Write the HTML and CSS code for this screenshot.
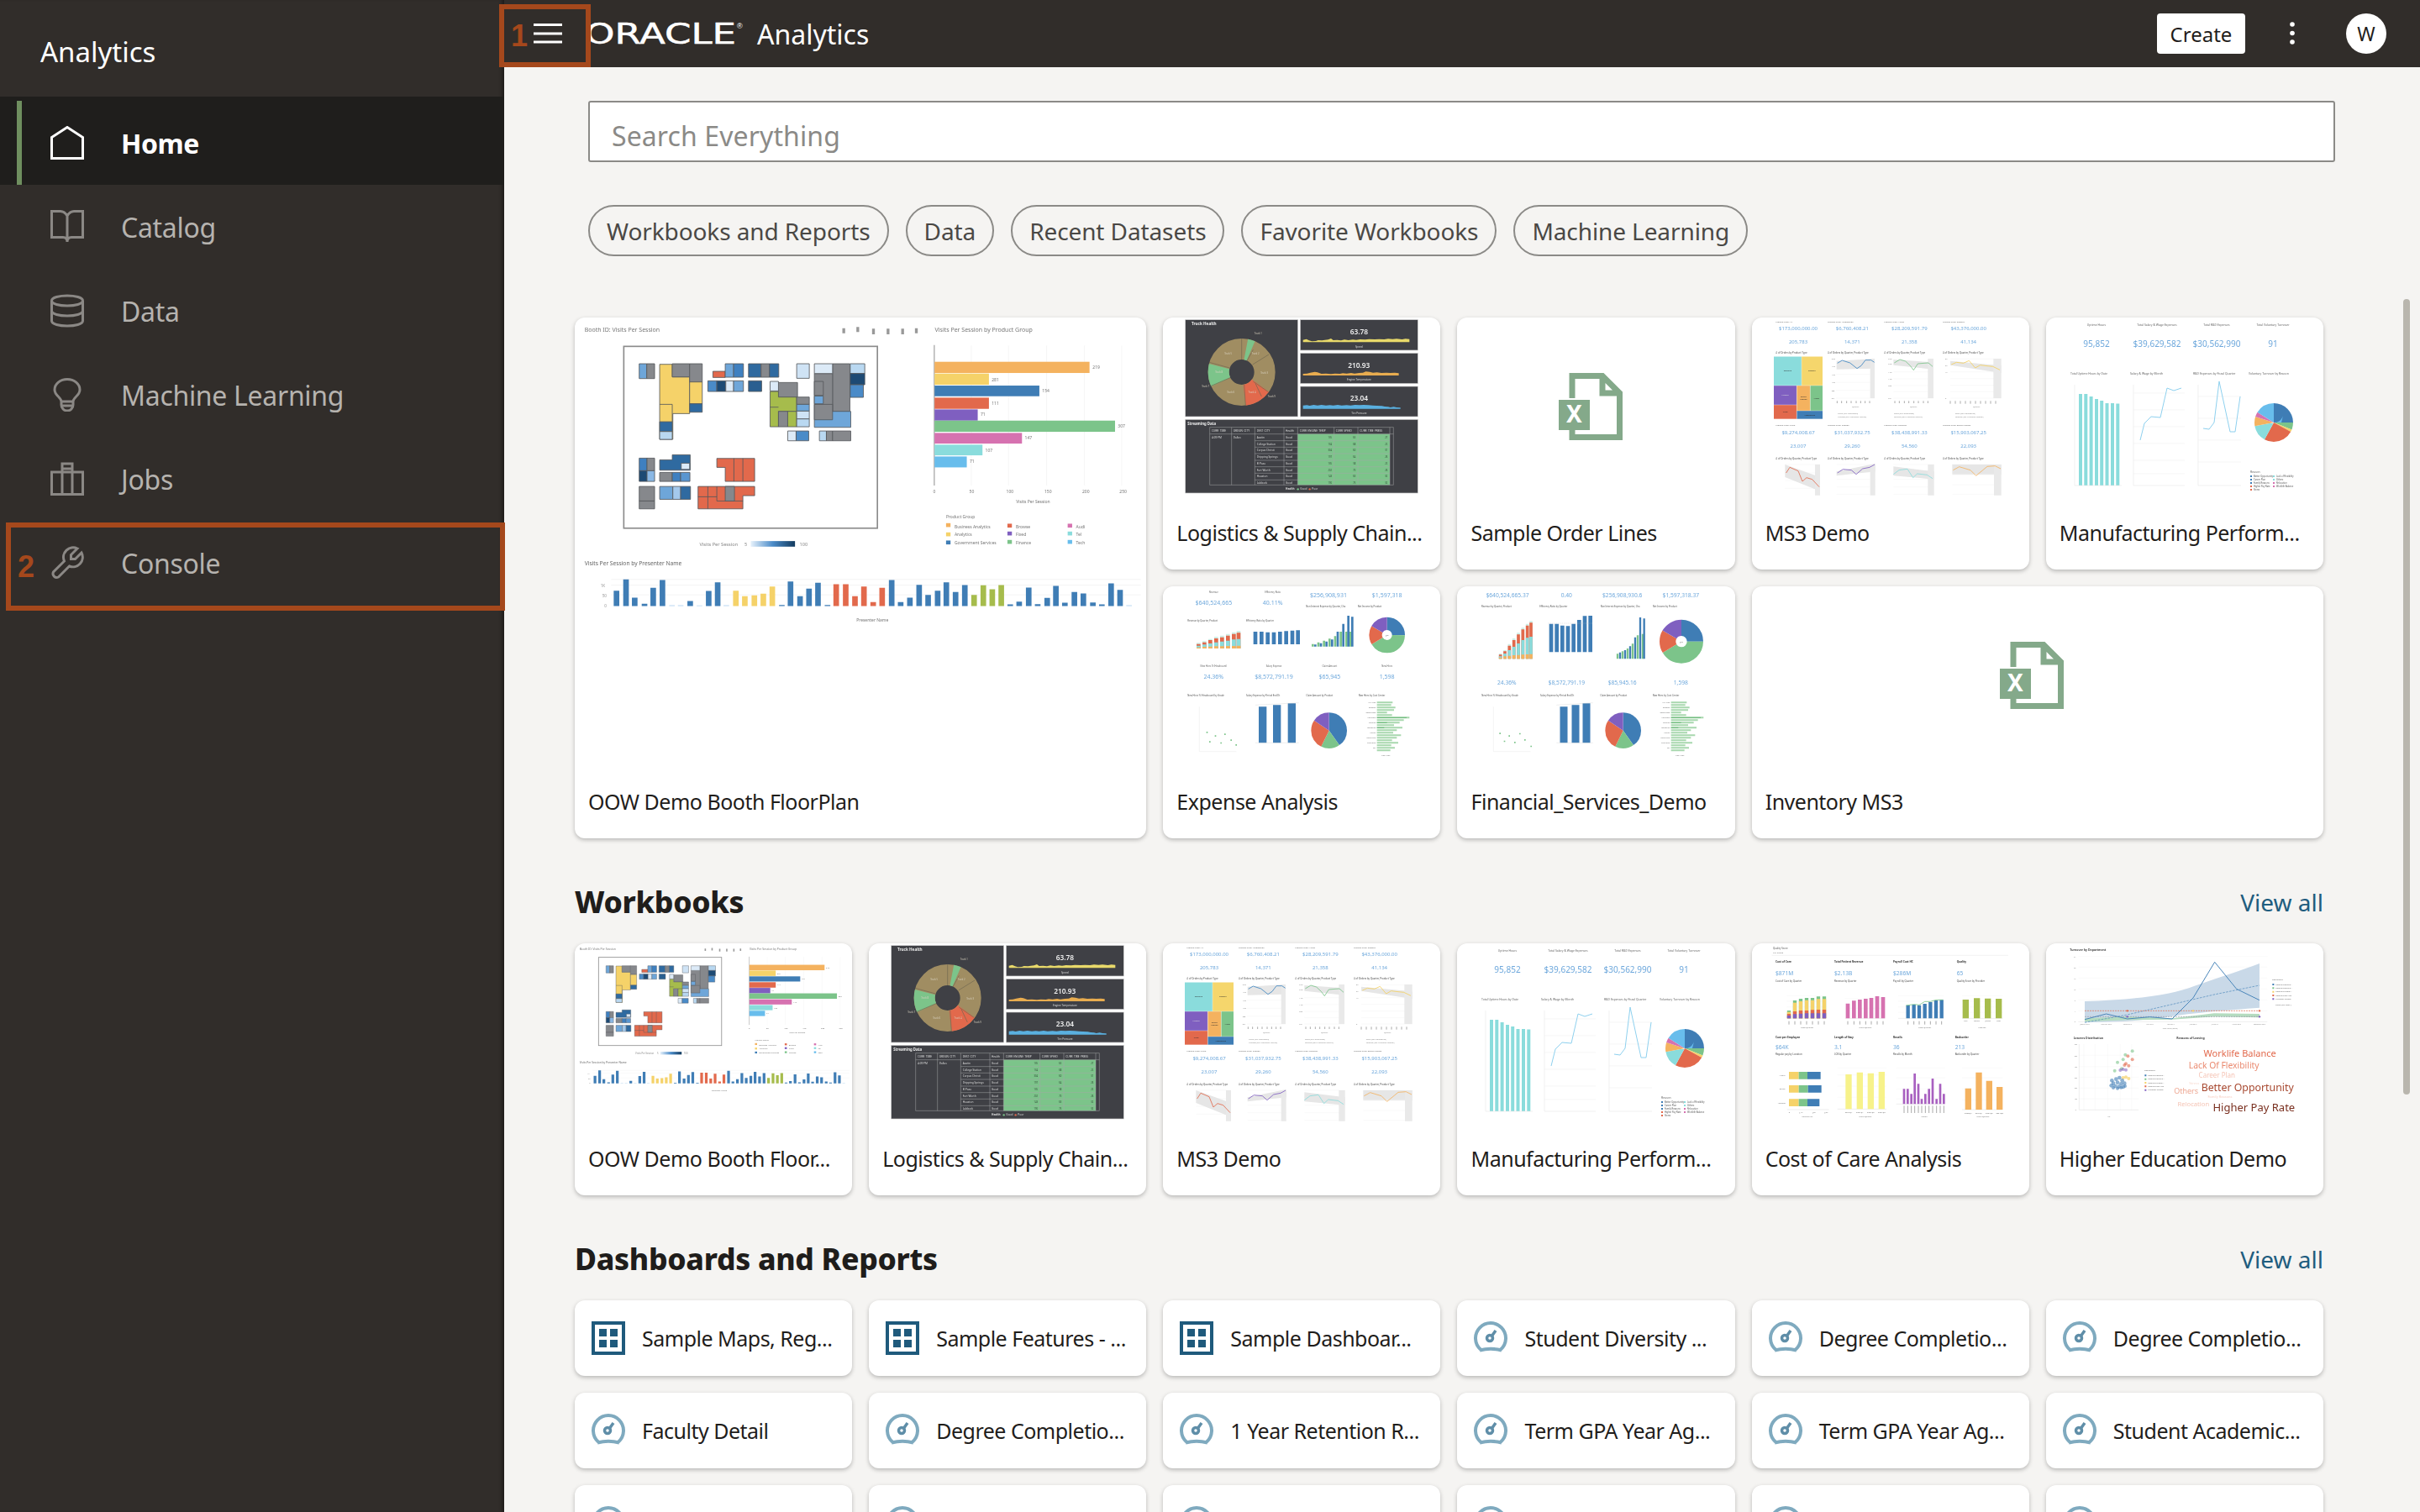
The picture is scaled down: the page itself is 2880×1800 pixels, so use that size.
FILE: index.html
```html
<!DOCTYPE html>
<html lang="en">
<head>
    <meta charset="UTF-8">
    <meta name="viewport" content="width=device-width, initial-scale=1.0">
    <title>Oracle Analytics</title>
    <link rel="stylesheet" href="styles.css">
</head>
<body>

<!-- Shared icons -->
<svg class="sprite" aria-hidden="true">
    <symbol id="i-home" viewBox="0 0 40 40"><path d="M1.5 38.5V13.5L20 1.5 38.5 13.5V38.5Z"/></symbol>
    <symbol id="i-book" viewBox="0 0 40 40"><path d="M20 7C18 3.5 15 1.5 12 1.5H1.5V32.5H15C18 32.5 20 34.5 20 38 20 34.5 22 32.5 25 32.5H38.5V1.5H28C25 1.5 22 3.5 20 7V38"/></symbol>
    <symbol id="i-data" viewBox="0 0 40 40"><path d="M1.5 8C1.5 0 38.5 0 38.5 8V32C38.5 40 1.5 40 1.5 32ZM1.5 8C1.5 16 38.5 16 38.5 8M1.5 20C1.5 28 38.5 28 38.5 20"/></symbol>
    <symbol id="i-bulb" viewBox="0 0 40 40"><path d="M13 28C13 23 5 21 5 14A15 12.5 0 0 1 35 14C35 21 27 23 27 28ZM13 28V32A7 7 0 0 0 27 32V28M13 33H27"/></symbol>
    <symbol id="i-jobs" viewBox="0 0 40 40"><path d="M1.5 12H38.5V38.5H1.5ZM14 38.5V2H26V38.5M14 8H26"/></symbol>
    <symbol id="i-tool" viewBox="0 0 40 40"><path d="M37 8 29.5 15.5H24.5V10.5L32 3A11.5 11.5 0 0 0 16.5 18L3.5 31A4.5 4.5 0 0 0 9.5 37L22.5 24A11.5 11.5 0 0 0 37 8Z"/></symbol>
    <symbol id="i-grid" viewBox="0 0 40 40">
        <rect class="grid-frame" x="2" y="2" width="36" height="36"/>
        <path class="grid-cells" d="M9 9H18V18H9ZM22 9H31V18H22ZM9 22H18V31H9ZM22 22H31V31H22Z"/>
    </symbol>
    <symbol id="i-gauge" viewBox="0 0 40 40">
        <path class="gauge-ring" d="M8 33.500A18 18 0 1 1 32 33.500M7 34.500Q20 31 33 34.500"/>
        <circle class="gauge-hub" cx="19" cy="20" r="3.500"/>
        <path class="gauge-hub" d="M21 18 26 11"/>
    </symbol>
</svg>

<div class="app">
    <!-- Боковое меню -->
    <aside class="sidebar">
        <div class="side-title">Analytics</div>
        <nav>
            <a class="nav-item active"><svg class="nav-icon"><use href="#i-home"/></svg>Home</a>
            <a class="nav-item"><svg class="nav-icon"><use href="#i-book"/></svg>Catalog</a>
            <a class="nav-item"><svg class="nav-icon"><use href="#i-data"/></svg>Data</a>
            <a class="nav-item"><svg class="nav-icon"><use href="#i-bulb"/></svg>Machine Learning</a>
            <a class="nav-item"><svg class="nav-icon"><use href="#i-jobs"/></svg>Jobs</a>
            <a class="nav-item"><svg class="nav-icon"><use href="#i-tool"/></svg>Console</a>
        </nav>
    </aside>

    <main class="main">
        <header class="topbar">
            <svg class="burger" viewBox="0 0 34 24"><path d="M0 1.500H34M0 12H34M0 22H34"/></svg>
            <svg class="logo" viewBox="0 0 190 44"><text class="logo-word" x="0" y="34" textLength="180" lengthAdjust="spacingAndGlyphs">ORACLE</text><text class="logo-reg" x="181" y="16">®</text></svg>
            <span class="brand">Analytics</span>
            <button class="create">Create</button>
            <svg class="kebab" viewBox="0 0 6 28"><circle cx="3" cy="3" r="2.800"/><circle cx="3" cy="13.500" r="2.800"/><circle cx="3" cy="24" r="2.800"/></svg>
            <span class="avatar">W</span>
        </header>

        <div class="content">
            <input class="search" type="text" placeholder="Search Everything">

            <div class="chips">
                <span class="chip">Workbooks and Reports</span>
                <span class="chip">Data</span>
                <span class="chip">Recent Datasets</span>
                <span class="chip">Favorite Workbooks</span>
                <span class="chip">Machine Learning</span>
            </div>

            <div class="grid recent">
                <div class="card wide tall">
                    <div class="thumb">
                        <!-- Floor plan, drawn at 3x of the large card -->
                        <svg class="shot" viewBox="0 0 2040 1200" preserveAspectRatio="xMinYMin meet">
                            <defs>
                                <linearGradient id="heat">
                                    <stop offset="0" stop-color="#e6f1fb"/>
                                    <stop offset=".5" stop-color="#4a8bc8"/>
                                    <stop offset="1" stop-color="#123a5e"/>
                                </linearGradient>
                            </defs>
                            <g id="t-floor">
                                <g font-size="21" fill="#777">
                                    <text x="35" y="52">Booth ID: Visits Per Session</text>
                                    <text x="1285" y="52">Visits Per Session by Product Group</text>
                                </g>
                                <path d="M960 38v18M1010 34v18M1066 40v20M1118 40v20M1170 40v20M1219 38v18" stroke="#999" stroke-width="10" fill="none"/>
                                <rect x="175" y="103" width="905" height="649" fill="#fff" stroke="#8c8c8c" stroke-width="5"/>
                                <g stroke="#55585c" stroke-width="2.500">
                                    <path d="M230 165h27v53h-27z" fill="#6ea6d9"/><path d="M257 165h28v53h-28z" fill="#86888c"/>
                                    <path d="M303 167H348V212H410V343H350V435H303Z" fill="#f5d269"/><path d="M303 310H348V372" fill="none"/>
                                    <path d="M348 165h62v47h-62z" fill="#86888c"/><path d="M410 165h45v65h-45z" fill="#86888c"/>
                                    <path d="M410 230h45v78h-45z" fill="#f5d269"/><path d="M410 308h45v30h-45z" fill="#2f6aa0"/>
                                    <path d="M303 372h45v35h-45z" fill="#2f6aa0"/><path d="M303 407h45v28h-45z" fill="#b9d8f1"/>
                                    <path d="M493 192h44v22h-44z" fill="#e2694c"/><path d="M537 165h30v48h-30z" fill="#6ea6d9"/><path d="M567 165h35v48h-35z" fill="#3f80c0"/>
                                    <path d="M620 165h45v48h-45z" fill="#2f6aa0"/><path d="M665 165h30v48h-30z" fill="#86888c"/><path d="M695 165h33v48h-33z" fill="#2f6aa0"/>
                                    <path d="M475 226h32v38h-32z" fill="#4a8bc8"/><path d="M507 226h32v38h-32z" fill="#1d4a74"/><path d="M539 226h28v38h-28z" fill="#dceaf7"/><path d="M567 226h35v38h-35z" fill="#6ea6d9"/>
                                    <path d="M620 226h47v38h-47z" fill="#2a5f90"/><path d="M792 165h45v52h-45z" fill="#cfe3f5"/>
                                    <path d="M920 165h62v170h-62z" fill="#86888c"/><path d="M855 200h65v135h-65z" fill="#86888c"/><path d="M855 165h65v35h-65z" fill="#dceaf7"/>
                                    <path d="M983 165h52v35h-52z" fill="#b9d8f1"/><path d="M983 200h52v40h-52z" fill="#1d4a74"/><path d="M983 240h47v45h-47z" fill="#4a8bc8"/>
                                    <path d="M855 335h130v57h-130z" fill="#6ea6d9"/><path d="M855 310h65v55h-65z" fill="#86888c"/><path d="M855 280h32v28h-32z" fill="#6ea6d9"/><path d="M855 228h32v50h-32z" fill="#86888c"/>
                                    <path d="M727 232h68v52h-68z" fill="#86888c"/><path d="M697 228h30v34h-30z" fill="#dceaf7"/>
                                    <path d="M697 264H727V284H792V335H727V390H697Z" fill="#a6bc4c"/><path d="M697 320H727" fill="none"/>
                                    <path d="M727 335h33v55h-33z" fill="#86888c"/><path d="M760 335h32v55h-32z" fill="#a6bc4c"/>
                                    <path d="M792 284h45v26h-45z" fill="#86888c"/><path d="M792 310h45v24h-45z" fill="#6ea6d9"/><path d="M792 334h45v28h-45z" fill="#cfe3f5"/><path d="M792 362h45v28h-45z" fill="#b9d8f1"/>
                                    <path d="M760 405h30v35h-30z" fill="#dceaf7"/><path d="M790 405h45v35h-45z" fill="#4a8bc8"/>
                                    <path d="M873 405h25v35h-25z" fill="#b9d8f1"/><path d="M898 405h22v35h-22z" fill="#86888c"/><path d="M920 405h65v35h-65z" fill="#86888c"/>
                                    <path d="M230 502h28v45h-28z" fill="#3f80c0"/><path d="M258 502h27v45h-27z" fill="#86888c"/><path d="M230 547h28v38h-28z" fill="#1d4a74"/><path d="M258 547h27v38h-27z" fill="#8ab8e5"/>
                                    <path d="M303 508H348V490H412V545H303Z" fill="#2f6aa0"/><path d="M380 520h30v22h-30z" fill="#dceaf7"/>
                                    <path d="M303 553h45v32h-45z" fill="#86888c"/><path d="M348 553h30v32h-30z" fill="#3f80c0"/><path d="M378 553h33v32h-33z" fill="#5a96d0"/>
                                    <path d="M230 603h55v52h-55z" fill="#86888c"/><path d="M230 655h55v28h-55z" fill="#86888c"/>
                                    <path d="M303 603h47v46h-47z" fill="#6ea6d9"/><path d="M350 603h28v46h-28z" fill="#a4c9ec"/><path d="M378 603h35v46h-35z" fill="#2f6aa0"/>
                                    <path d="M507 503H642V585H537V535H507Z" fill="#e2694c"/><path d="M568 503V585M600 503V585" fill="none"/>
                                    <path d="M440 603H642V636H600V683H440Z" fill="#e2694c"/><path d="M475 603V683M507 603V655H600M440 640H507" fill="none"/>
                                    <path d="M537 603h33v52h-33z" fill="#86888c"/>
                                </g>
                                <g font-size="17" fill="#888">
                                    <text x="445" y="815">Visits Per Session</text>
                                    <text x="606" y="815">5</text>
                                    <text x="802" y="815">100</text>
                                </g>
                                <rect x="628" y="798" width="158" height="20" fill="url(#heat)"/>

                                <path d="M1415 100V600M1548 100V600M1684 100V600M1819 100V600M1952 100V600" stroke="#f0f0f0" stroke-width="2"/>
                                <path d="M1283 98V600" stroke="#aaa" stroke-width="4"/>
                                <rect x="1284" y="158" width="553" height="40" fill="#f4b25f"/>
                                <rect x="1284" y="200" width="194" height="40" fill="#f5d269"/>
                                <rect x="1284" y="243" width="374" height="38" fill="#3f7db5"/>
                                <rect x="1284" y="286" width="194" height="40" fill="#e2694c"/>
                                <rect x="1284" y="328" width="154" height="40" fill="#7f5fc0"/>
                                <rect x="1284" y="368" width="644" height="40" fill="#7cc48a"/>
                                <rect x="1284" y="412" width="312" height="38" fill="#d672b0"/>
                                <rect x="1284" y="454" width="171" height="38" fill="#8adcdc"/>
                                <rect x="1284" y="496" width="115" height="39" fill="#68bdec"/>
                                <g font-size="15" fill="#777">
                                    <text x="1848" y="184">219</text><text x="1488" y="228">281</text><text x="1668" y="268">154</text><text x="1488" y="312">111</text>
                                    <text x="1448" y="352">71</text><text x="1938" y="394">307</text><text x="1606" y="436">147</text><text x="1465" y="480">107</text><text x="1409" y="520">71</text>
                                    <text x="1279" y="628">0</text><text x="1408" y="628">50</text><text x="1540" y="628">100</text><text x="1676" y="628">150</text><text x="1811" y="628">200</text><text x="1944" y="628">250</text>
                                    <text x="1575" y="662">Visits Per Session</text>
                                    <text x="1325" y="718">Product Group</text>
                                    <text x="1355" y="754">Business Analytics</text><text x="1355" y="781">Analytics</text><text x="1355" y="810">Government Services</text>
                                    <text x="1574" y="754">Browse</text><text x="1574" y="781">Fixed</text><text x="1574" y="810">Finance</text>
                                    <text x="1789" y="754">Audi</text><text x="1789" y="781">Tel</text><text x="1789" y="810">Tech</text>
                                    <text x="1005" y="1085">Presenter Name</text>
                                </g>
                                <path d="M1325 748h16v-14h-16z" fill="#f4b25f"/><path d="M1325 781h16v-14h-16z" fill="#f5d269"/><path d="M1325 810h16v-14h-16z" fill="#3f7db5"/>
                                <path d="M1544 750h16v-14h-16z" fill="#e2694c"/><path d="M1544 778h16v-14h-16z" fill="#7f5fc0"/><path d="M1544 808h16v-14h-16z" fill="#7cc48a"/>
                                <path d="M1759 750h16v-14h-16z" fill="#d672b0"/><path d="M1759 778h16v-14h-16z" fill="#8adcdc"/><path d="M1759 808h16v-14h-16z" fill="#68bdec"/>
                                <text x="35" y="886" font-size="20" fill="#666">Visits Per Session by Presenter Name</text>
                                <path d="M130 935H2020M130 955H2020M130 990H2020" stroke="#eee" stroke-width="2"/>
                                <g stroke-width="20" fill="none">
                                    <path stroke="#3f7db5" d="M149 1030V975M183 1030V935M214 1030V1000M249 1030V1022M280 1030V965M313 1030V937M412 1030V1012M478 1030V976M510 1030V945M739 1030V1026M770 1030V942M804 1030V995M836 1030V968M868 1030V947M902 1030V1026M1131 1030V937M1163 1030V1016M1196 1030V1000M1229 1030V954M1261 1030V990M1295 1030V975M1326 1030V945M1359 1030V980M1392 1030V955M1554 1030V1024M1586 1030V1014M1620 1030V964M1652 1030V1023M1686 1030V1001M1717 1030V958M1749 1030V1018M1783 1030V980M1815 1030V985M1849 1030V1017M1881 1030V1024M1914 1030V949M1946 1030V972"/>
                                    <path stroke="#b9d8f1" d="M347 1030V1027M378 1030V1027M445 1030V1028M541 1030V1027M1978 1030V1027"/>
                                    <path stroke="#f5d269" d="M575 1030V975M607 1030V995M641 1030V992M673 1030V986M705 1030V960"/>
                                    <path stroke="#e2694c" d="M933 1030V952M967 1030V952M1000 1030V995M1032 1030V960M1065 1030V1016M1097 1030V965"/>
                                    <path stroke="#a6bc4c" d="M1425 1030V990M1458 1030V956M1490 1030V970M1522 1030V955"/>
                                </g>
                                <g font-size="14" fill="#999">
                                    <text x="92" y="962">1K</text><text x="98" y="998">50</text><text x="106" y="1034">0</text>
                                </g>
                            </g>
                        </svg>
                    </div>
                    <div class="card-name">OOW Demo Booth FloorPlan</div>
                </div>
                <div class="card">
                    <div class="thumb">
                        <svg class="shot" viewBox="0 0 990 642" preserveAspectRatio="xMinYMin meet">
                            <g id="t-logistics">
                                <g fill="#3f4045" stroke="#cfcfcf" stroke-width="2">
                                    <rect x="80" y="8" width="402" height="346"/>
                                    <rect x="490" y="8" width="420" height="109"/>
                                    <rect x="490" y="127" width="420" height="109"/>
                                    <rect x="490" y="246" width="420" height="108"/>
                                    <rect x="80" y="364" width="830" height="263"/>
                                </g>
                                <g fill="none" stroke-width="75" transform="rotate(-90 281 195)">
                                    <circle cx="281" cy="195" r="82.500" stroke="#a08d62" pathLength="100"/>
                                    <circle cx="281" cy="195" r="82.500" stroke="#7cc48a" pathLength="100" stroke-dasharray="3.500 96.500" stroke-dashoffset="-3"/>
                                    <circle cx="281" cy="195" r="82.500" stroke="#e2694c" pathLength="100" stroke-dasharray="13 87" stroke-dashoffset="-35"/>
                                    <circle cx="281" cy="195" r="82.500" stroke="#7cc48a" pathLength="100" stroke-dasharray="11 89" stroke-dashoffset="-68"/>
                                </g>
                                <path d="M281 75V150M322 115 300 155M378 132 320 168M375 265 322 228M330 235 352 282M295 315 290 238M170 245 240 215M165 160 238 180" stroke="#6f6650" stroke-width="2"/>
                                <g font-size="8" fill="#d8d2c0" text-anchor="middle">
                                    <text x="233" y="132">Truck 5</text><text x="330" y="132">Truck 2</text><text x="362" y="200">Truck 3</text><text x="242" y="270">Truck 6</text>
                                    <text x="318" y="271">Truck 4</text><text x="388" y="284">Truck 9</text><text x="152" y="250">Truck 7</text><text x="200" y="198">Truck 8</text><text x="340" y="60">Truck 1</text>
                                </g>
                                <text x="102" y="28" font-size="14" font-weight="700" fill="#eee">Truck Health</text>
                                <g font-size="25" font-weight="600" fill="#eee" text-anchor="middle">
                                    <text x="700" y="60">63.78</text><text x="700" y="179">210.93</text><text x="700" y="298">23.04</text>
                                </g>
                                <path fill="#e8d96a" d="M500 88V80l12-3 10 5 10 3 14-1 8-3 14 1 10-2 12-1 10-4 8 6 14-1 14 2 12-3 14 2 16-2 12 1 14-2 18 1 14-2 20 1 16-1 18 1 14-2 16 1 14-1 20 2 12-2 14 1V88Z"/>
                                <path fill="#e8ac4f" d="M500 207V201l14-1 12-3 16-3 10 2 14 5 16-1 18 2 14-2 18 1 10-2 14 1 16-2 12 2 16-2 14-1 10-4 14 1 12 3 14-1 16 2 18-1 14 1 16-1 14 2V207Z"/>
                                <path fill="#5ab0e0" d="M500 326V314l14-1 10 2 14-3 14 2 14-2 16 2 14-1 12 1 16-2 14 2 18-1 14 1 16-2 16 1 14-1 18 1 16 1 14 1 18 1 10 2 12 1 8 2 12-2 10 2 14 1V326Z"/>
                                <g font-size="9" fill="#ddd" text-anchor="middle">
                                    <text x="700" y="107">Speed</text><text x="700" y="226">Engine Temperature</text><text x="700" y="345">Tire Pressure</text>
                                </g>
                                <text x="88" y="384" font-size="13" font-weight="700" fill="#eee">Streaming Data</text>
                                <rect x="481" y="416" width="329" height="182" fill="#7cc48a"/>
                                <path d="M167 392H823V598H167ZM245 392V598M328 392V598M432 392V598M481 392V598M611 392V598M696 392V598M810 392V598M167 416H823M328 440H810M328 463H810M328 486H810M328 510H810M328 533H810M328 556H810M328 580H810" fill="none" stroke="#a5a6a8" stroke-width="1.500"/>
                                <g font-size="9.500" fill="#ddd">
                                    <text x="174" y="408">CURR_TIME</text><text x="251" y="408">ORIGIN_CITY</text><text x="335" y="408">DEST_CITY</text><text x="438" y="408">Health</text>
                                    <text x="488" y="408">CURR_ENGINE_TEMP</text><text x="617" y="408">CURR_SPEED</text><text x="703" y="408">CURR_TIRE_PRESS</text>
                                    <text x="174" y="431">4:09 PM</text><text x="251" y="431">Dallas</text>
                                    <text x="335" y="431">Austin</text><text x="335" y="455">College Station</text><text x="335" y="478">Corpus Christi</text><text x="335" y="501">Dripping Springs</text>
                                    <text x="335" y="525">El Paso</text><text x="335" y="548">Fort Worth</text><text x="335" y="571">Houston</text><text x="335" y="595">Lubbock</text>
                                    <text x="438" y="431">Good</text><text x="438" y="455">Good</text><text x="438" y="478">Good</text><text x="438" y="501">Good</text>
                                    <text x="438" y="525">Good</text><text x="438" y="548">Good</text><text x="438" y="571">Good</text><text x="438" y="595">Good</text>
                                    <text x="438" y="616" font-weight="700">Health</text><text x="490" y="616">Good</text><text x="532" y="616">Poor</text>
                                </g>
                                <g font-size="8" fill="#2f4a35" text-anchor="end">
                                    <text x="603" y="431">135</text><text x="603" y="455">134</text><text x="603" y="478">304</text><text x="603" y="501">197</text><text x="603" y="525">135</text><text x="603" y="548">202</text><text x="603" y="571">143</text><text x="603" y="595">190</text>
                                    <text x="688" y="431">65</text><text x="688" y="455">68</text><text x="688" y="478">60</text><text x="688" y="501">64</text><text x="688" y="525">58</text><text x="688" y="548">70</text><text x="688" y="571">63</text><text x="688" y="595">75</text>
                                    <text x="802" y="431">27</text><text x="802" y="455">22</text><text x="802" y="478">31</text><text x="802" y="501">26</text><text x="802" y="525">22</text><text x="802" y="548">26</text><text x="802" y="571">32</text><text x="802" y="595">32</text>
                                </g>
                                <circle cx="482" cy="613" r="3.500" fill="#7cc48a"/><circle cx="524" cy="613" r="3.500" fill="#e2694c"/>
                            </g>
                        </svg>
                    </div>
                    <div class="card-name">Logistics &amp; Supply Chain...</div>
                </div>
                <div class="card">
                    <div class="thumb sheet">
                        <svg class="sheet-icon" viewBox="0 0 89 80">
                            <g id="sheet">
                                <path class="sheet-line" d="M16 30V3.500H52L72.500 24V76.500H16V68M52 3.500V24H72.500"/>
                                <rect class="sheet-box" x="0" y="32" width="37" height="36"/>
                                <text class="sheet-x" x="18.500" y="59">X</text>
                            </g>
                        </svg>
                    </div>
                    <div class="card-name">Sample Order Lines</div>
                </div>
                <div class="card">
                    <div class="thumb">
                        <svg class="shot" viewBox="0 0 990 642" preserveAspectRatio="xMinYMin meet">
                            <g id="t-ms3">
                                <g font-size="7.500" fill="#666">
                                    <text x="85" y="18">Product Type: All</text><text x="270" y="18">Product Type: Accessories</text><text x="472" y="18">Product Type: Audio</text><text x="681" y="18">Product Type: Camera</text>
                                    <text x="85" y="386">Product Type: Fixed</text><text x="270" y="386">Product Type: Phones</text><text x="472" y="386">Product Type: Portable</text><text x="681" y="386">Product Type: Smart Phones</text>
                                </g>
                                <g font-size="18" fill="#6ea8dc" text-anchor="middle">
                                    <text x="165" y="46">$173,000,000.00</text><text x="358" y="46">$6,760,408.21</text><text x="562" y="46">$28,209,591.79</text><text x="773" y="46">$43,376,000.00</text>
                                    <text x="165" y="92">205,783</text><text x="358" y="92">14,371</text><text x="562" y="92">21,358</text><text x="773" y="92">41,134</text>
                                    <text x="165" y="416">$9,274,008.67</text><text x="358" y="416">$31,037,932.75</text><text x="562" y="416">$38,438,991.33</text><text x="773" y="416">$15,903,067.25</text>
                                    <text x="165" y="466">23,007</text><text x="358" y="466">29,260</text><text x="562" y="466">54,560</text><text x="773" y="466">22,093</text>
                                </g>
                                <g font-size="8.500" fill="#444">
                                    <text x="85" y="129"># of Orders by Product Type</text><text x="270" y="129"># of Orders by Quarter, Product Type</text><text x="472" y="129"># of Orders by Quarter, Product Type</text><text x="681" y="129"># of Orders by Quarter, Product Type</text>
                                    <text x="85" y="507"># of Orders by Quarter, Product Type</text><text x="270" y="507"># of Orders by Quarter, Product Type</text><text x="472" y="507"># of Orders by Quarter, Product Type</text><text x="681" y="507"># of Orders by Quarter, Product Type</text>
                                </g>
                                <rect x="78" y="139" width="99" height="104" fill="#8adcdc"/><rect x="177" y="139" width="75" height="104" fill="#f5d66c"/>
                                <rect x="78" y="243" width="82" height="69" fill="#7f5fc0"/><rect x="78" y="312" width="82" height="50" fill="#e2694c"/>
                                <rect x="160" y="243" width="48" height="90" fill="#f4b25f"/><rect x="208" y="243" width="44" height="90" fill="#7cc48a"/><rect x="160" y="333" width="92" height="29" fill="#3f7db5"/>
                                <path d="M78 139H252M78 243H252M160 243V362M78 312H160M160 333H252M208 243V333M177 139V243" stroke="#fff" fill="none"/>
                                <g font-size="7" fill="#2a2a2a" text-anchor="middle">
                                    <text x="127" y="193">Portable</text><text x="214" y="193">Camera</text><text x="119" y="278" fill="#ddd">Phones</text><text x="119" y="339">Fixed</text>
                                    <text x="184" y="284">Smart</text><text x="184" y="295">Phones</text><text x="230" y="290">Audio</text><text x="206" y="350">Accessories</text>
                                </g>
                                <path d="M300 175H438M300 203H438M300 232H438M300 260H438M300 288H438M505 165H648M505 194H648M505 219H648M505 243H648M505 265H648M505 288H648M708 148H890M708 170H890M708 194H890M708 218H890M708 242H890M708 265H890M708 288H890M118 525H243M118 555H243M118 582H243M118 610H243M302 525H440M302 552H440M302 578H440M302 605H440M302 632H440M505 525H650M505 550H650M505 578H650M505 605H650M505 632H650M715 525H890M715 562H890M715 597H890M715 632H890" stroke="#ededed" fill="none"/>
                                <path fill="#e6e6e6" d="M302 155 438 147V182L302 185ZM505 150 648 160V185L505 170ZM708 155 890 172V198L708 170ZM118 525 243 570V620L118 570ZM302 550 440 522V550L302 565ZM505 532 650 550V578L505 565ZM715 525 890 525V560L715 560Z"/>
                                <path fill="#e9e9e9" d="M422 147h16v141h-16zM628 147h20v141h-20zM862 147h28v141h-28zM225 525h18v110h-18zM422 525h18v110h-18zM628 525h22v110h-22zM864 525h26v110h-26z"/>
                                <g fill="none" stroke-width="2.500">
                                    <path stroke="#3f86c0" d="M305 163 322 153 350 162 375 182 390 172 405 152 425 152 437 160"/>
                                    <path stroke="#7cc48a" d="M508 162 528 150 548 156 565 172 577 188 592 165 615 163 630 162 645 175"/>
                                    <path stroke="#f4d060" d="M712 168 730 160 755 163 775 154 797 180 815 170 840 173 860 175 885 187"/>
                                    <path stroke="#e2694c" d="M122 555 135 535 165 548 180 585 195 572 215 578 240 605"/>
                                    <path stroke="#7f5fc0" d="M305 555 325 542 355 545 372 560 395 540 420 535 438 525"/>
                                    <path stroke="#8adcdc" d="M505 560 525 545 555 541 575 572 590 558 625 562 645 575"/>
                                    <path stroke="#f4b25f" d="M718 545 740 533 780 545 800 565 840 532 868 530 888 540"/>
                                </g>
                                <g font-size="6.500" fill="#888">
                                    <text x="284" y="150">2.0K</text><text x="284" y="178">1.5K</text><text x="284" y="206">1.2K</text><text x="284" y="235">1.0K</text><text x="284" y="263">500</text><text x="284" y="290">0.0</text>
                                    <text x="487" y="150">2.5K</text><text x="487" y="168">2.0K</text><text x="487" y="197">1.5K</text><text x="487" y="222">1.0K</text><text x="487" y="246">500</text><text x="487" y="290">0.0</text>
                                    <text x="690" y="150">3K</text><text x="690" y="173">2K</text><text x="690" y="197">1K</text><text x="690" y="290">0</text>
                                    <text x="358" y="322">Quarter</text><text x="565" y="322">Quarter</text><text x="790" y="322">Quarter</text>
                                    <text x="307" y="344">Trend (95% Confidence)</text><text x="307" y="357">Forecast (95% Prediction Interval)</text>
                                    <text x="507" y="344">Trend (95% Confidence)</text><text x="507" y="357">Forecast (95% Prediction Interval)</text>
                                    <text x="725" y="344">Trend (95% Confidence)</text><text x="725" y="357">Forecast (95% Prediction Interval)</text>
                                </g>
                                <path d="M304 298v8M320 298v8M338 298v8M354 298v8M372 298v8M388 298v8M404 298v8M420 298v8M510 298v8M526 298v8M544 298v8M560 298v8M578 298v8M594 298v8M612 298v8M628 298v8M708 298v10M726 298v10M744 298v10M762 298v10M780 298v10M798 298v10M816 298v10M834 298v10M852 298v10M870 298v10" stroke="#aaa" stroke-width="3"/>
                            </g>
                        </svg>
                    </div>
                    <div class="card-name">MS3 Demo</div>
                </div>
                <div class="card">
                    <div class="thumb">
                        <!-- Drawn at card size, the others at 3x -->
                        <svg class="shot" viewBox="0 0 330 214" preserveAspectRatio="xMinYMin meet">
                            <g id="t-mfg">
                                <g font-size="3.400" fill="#666" text-anchor="middle">
                                    <text x="60" y="9.500">Uptime Hours</text><text x="132" y="9.500">Total Salary &amp; Wage Expenses</text><text x="203" y="9.500">Total R&amp;D Expenses</text><text x="270" y="9.500">Total Voluntary Turnover</text>
                                </g>
                                <g font-size="10" fill="#6ea8dc" text-anchor="middle">
                                    <text x="60" y="35">95,852</text><text x="132" y="35">$39,629,582</text><text x="203" y="35">$30,562,990</text><text x="270" y="35">91</text>
                                </g>
                                <g font-size="3.400" fill="#666">
                                    <text x="29" y="68">Total Uptime Hours by Date</text><text x="100" y="68">Salary &amp; Wage by Month</text><text x="175" y="68">R&amp;D Expenses by Fiscal Quarter</text><text x="241" y="68">Voluntary Turnover by Reason</text>
                                    <text x="243" y="185">Reason</text>
                                </g>
                                <path stroke="#8adcdc" stroke-width="4" d="M41 200V91M47.300 200V91M53.600 200V94M60 200V97M66.200 200V99M72.500 200V102M79 200V102M85.300 200V102.500"/>
                                <path d="M34 80V200H90M104 80V200H165M181 80V200H232" fill="none" stroke="#e6e6e6" stroke-width=".6"/>
                                <path d="M104 90H165M104 110H165M104 130H165M104 150H165M104 170H165M104 186H165M181 94H232M181 120H232M181 146H232M181 172H232" stroke="#f0f0f0" stroke-width=".6"/>
                                <path d="M112 146 117 126 125 118 136 119 144 84 152 87 161 84" fill="none" stroke="#8ed0ee" stroke-width="1"/>
                                <path d="M187 132 194 133 200 125 206 76 219 136 225 136 231 94" fill="none" stroke="#8ed0ee" stroke-width="1"/>
                                <g fill="none" stroke-width="23" transform="rotate(-90 271 125)">
                                    <circle cx="271" cy="125" r="11.500" stroke="#3f7db5" pathLength="100" stroke-dasharray="25 75"/>
                                    <circle cx="271" cy="125" r="11.500" stroke="#7cc48a" pathLength="100" stroke-dasharray="6 94" stroke-dashoffset="-25"/>
                                    <circle cx="271" cy="125" r="11.500" stroke="#f5d269" pathLength="100" stroke-dasharray="2 98" stroke-dashoffset="-31"/>
                                    <circle cx="271" cy="125" r="11.500" stroke="#e2694c" pathLength="100" stroke-dasharray="25 75" stroke-dashoffset="-33"/>
                                    <circle cx="271" cy="125" r="11.500" stroke="#8adcdc" pathLength="100" stroke-dasharray="14 86" stroke-dashoffset="-58"/>
                                    <circle cx="271" cy="125" r="11.500" stroke="#f4b25f" pathLength="100" stroke-dasharray="8 92" stroke-dashoffset="-72"/>
                                    <circle cx="271" cy="125" r="11.500" stroke="#d672b0" pathLength="100" stroke-dasharray="4 96" stroke-dashoffset="-80"/>
                                    <circle cx="271" cy="125" r="11.500" stroke="#68bdec" pathLength="100" stroke-dasharray="16 84" stroke-dashoffset="-84"/>
                                </g>
                                <g font-size="2.600" fill="#555">
                                    <text x="247" y="190">Better Opportunity</text><text x="247" y="194">Career Plan</text><text x="247" y="198">Family Reasons</text><text x="247" y="202">Higher Pay Rate</text><text x="247" y="206">Stress</text>
                                    <text x="274" y="190">Lack of Flexibility</text><text x="274" y="194">Others</text><text x="274" y="198">Relocation</text><text x="274" y="202">Worklife Balance</text>
                                </g>
                                <path d="M243 188h2v2h-2zM243 192h2v2h-2zM243 196h2v2h-2z" fill="#3f7db5"/><path d="M243 200h2v2h-2zM243 204h2v2h-2z" fill="#e2694c"/>
                                <path d="M270 188h2v2h-2zM270 192h2v2h-2z" fill="#8adcdc"/><path d="M270 196h2v2h-2zM270 200h2v2h-2z" fill="#d672b0"/>
                            </g>
                        </svg>
                    </div>
                    <div class="card-name">Manufacturing Perform...</div>
                </div>
                <div class="card">
                    <div class="thumb">
                        <svg class="shot" viewBox="0 0 990 642" preserveAspectRatio="xMinYMin meet">
                            <g font-size="8" fill="#666" text-anchor="middle">
                                <text x="181" y="23">Revenue</text><text x="392" y="23">Efficiency Ratio</text>
                                <text x="181" y="288">New Hires % (Headcount)</text><text x="396" y="288">Salary Expense</text><text x="595" y="288">Claim Amount</text><text x="800" y="288">New Hires</text>
                            </g>
                            <g font-size="21" fill="#6ea8dc" text-anchor="middle">
                                <text x="181" y="66">$640,524,665</text><text x="392" y="66">40.11%</text><text x="591" y="40">$256,908,931</text><text x="800" y="40">$1,597,318</text>
                                <text x="181" y="331">24.36%</text><text x="396" y="331">$8,572,791.19</text><text x="595" y="331">$65,945</text><text x="800" y="331">1,598</text>
                            </g>
                            <g font-size="8" fill="#555">
                                <text x="88" y="127">Revenue by Quarter, Product</text><text x="297" y="127">Efficiency Ratio by Quarter</text>
                                <text x="511" y="76">Non Interest Expense by Quarter, Cha</text><text x="695" y="76">Net Income by Product</text>
                            </g>
                            <g fill="none" stroke-width="14">
                                <path stroke="#cfeee6" d="M127 222V202M148 222V196M169 222V188M190 222V180M211 222V176M232 222V170M253 222V164M270 222V159"/>
                                <path stroke="#e2694c" d="M127 222V206M148 222V200M169 222V192M190 222V186M211 222V182M232 222V176M253 222V170M270 222V166"/>
                                <path stroke="#8adcdc" d="M127 222V212M148 222V208M169 222V204M190 222V200M211 222V197M232 222V194M253 222V190M270 222V188"/>
                                <path stroke="#f4b25f" d="M127 222V218M148 222V216M169 222V215M190 222V214M211 222V214M232 222V213M253 222V213M270 222V212"/>
                                <path stroke="#3f7db5" d="M330 207V162M352 207V162M374 207V164M396 207V164M418 207V162M440 207V160M462 207V158M482 207V157"/>
                            </g>
                            <g fill="none" stroke-width="8">
                                <path stroke="#7cc48a" d="M535 215V206M555 215V200M575 215V194M595 215V187M615 215V178M635 215V162M655 215V162M669 215V162"/>
                                <path stroke="#3f7db5" d="M544 215V208M564 215V203M584 215V197M604 215V190M624 215V162M644 215V134M662 215V105M676 215V109"/>
                            </g>
                            <g fill="none" stroke-width="46" transform="rotate(-90 800 174)">
                                <circle cx="800" cy="174" r="41" stroke="#3f7db5" pathLength="100" stroke-dasharray="25 75"/>
                                <circle cx="800" cy="174" r="41" stroke="#7cc48a" pathLength="100" stroke-dasharray="41 59" stroke-dashoffset="-25"/>
                                <circle cx="800" cy="174" r="41" stroke="#e2694c" pathLength="100" stroke-dasharray="17 83" stroke-dashoffset="-66"/>
                                <circle cx="800" cy="174" r="41" stroke="#7f5fc0" pathLength="100" stroke-dasharray="17 83" stroke-dashoffset="-83"/>
                            </g>
                            <text x="800" y="177" font-size="7" fill="#444" text-anchor="middle">$M</text>
                            <g id="fin-titles" font-size="8" fill="#555">
                                <text x="88" y="392">New Hires % (Headcount) by Grade</text>
                                <text x="297" y="392">Salary Expense by Period End Dt</text>
                                <text x="511" y="392">Claim Amount by Product</text>
                                <text x="698" y="392">New Hires by Cost Center</text>
                            </g>
                            <path d="M130 430V590H262" fill="none" stroke="#ddd"/>
                            <path fill="#7cc48a" d="M165 553h5v5h-5zM185 532h5v5h-5zM219 526h5v5h-5zM241 547h5v5h-5zM259 564h5v5h-5zM155 519h5v5h-5zM205 557h5v5h-5z"/>
                            <path stroke="#3f7db5" stroke-width="28" d="M356 559V430M407 559V424M460 559V418"/>
                            <path d="M330 559H485M330 424 485 416" stroke="#ccc" fill="none"/>
                            <g id="fin-lower">
                                <g fill="none" stroke-width="64" transform="rotate(-90 593 515)">
                                    <circle cx="593" cy="515" r="32" stroke="#3f7db5" pathLength="100" stroke-dasharray="40 60"/>
                                    <circle cx="593" cy="515" r="32" stroke="#7cc48a" pathLength="100" stroke-dasharray="17 83" stroke-dashoffset="-40"/>
                                    <circle cx="593" cy="515" r="32" stroke="#e2694c" pathLength="100" stroke-dasharray="27 73" stroke-dashoffset="-57"/>
                                    <circle cx="593" cy="515" r="32" stroke="#7f5fc0" pathLength="100" stroke-dasharray="16 84" stroke-dashoffset="-84"/>
                                </g>
                                <path stroke="#a8d8ae" stroke-width="6" d="M764 415H820M764 424H815M764 433H830M764 442H825M764 451H800M764 460H818M764 469H880M764 478H860M764 487H845M764 496H825M764 505H855M764 514H835M764 523H822M764 532H850M764 541H835M764 550H818M764 559H840M764 568H815M764 577H828M764 586H812"/>
                                <path stroke="#6cb87a" stroke-width="3" d="M764 469H870M764 487H800M764 505H790"/>
                                <g font-size="6.500" fill="#777" text-anchor="end">
                                    <text x="760" y="418">HR Audit</text><text x="760" y="436">Benefits</text><text x="760" y="454">Compliance</text><text x="760" y="472">Help Desk</text><text x="760" y="490">Training</text>
                                    <text x="760" y="508">Marketing</text><text x="760" y="526">Payroll</text><text x="760" y="544">Sales West</text><text x="760" y="562">Sales East</text><text x="760" y="580">Tax</text>
                                </g>
                                <text x="780" y="606" font-size="6.500" fill="#777">New Hires</text>
                            </g>
                        </svg>
                    </div>
                    <div class="card-name">Expense Analysis</div>
                </div>
                <div class="card">
                    <div class="thumb">
                        <svg class="shot" viewBox="0 0 990 642" preserveAspectRatio="xMinYMin meet">
                            <g font-size="20" fill="#6ea8dc" text-anchor="middle">
                                <text x="180" y="40">$640,524,665.37</text><text x="391" y="40">0.40</text><text x="590" y="40">$256,908,930.6</text><text x="799" y="40">$1,597,318.37</text>
                                <text x="178" y="352">24.36%</text><text x="391" y="352">$8,572,791.19</text><text x="590" y="352">$85,945.16</text><text x="799" y="352">1,598</text>
                            </g>
                            <g font-size="8" fill="#555">
                                <text x="87" y="76">Revenue by Quarter, Product</text><text x="295" y="76">Efficiency Ratio by Quarter</text>
                                <text x="512" y="76">Non Interest Expense by Quarter, Cha</text><text x="699" y="76">Net Income by Product</text>
                            </g>
                            <g fill="none" stroke-width="11">
                                <path stroke="#cfeee6" d="M155 259V240M171 259V228M187 259V206M203 259V186M219 259V166M235 259V148M251 259V134M264 259V124"/>
                                <path stroke="#e2694c" d="M155 259V244M171 259V232M187 259V212M203 259V192M219 259V172M235 259V154M251 259V140M264 259V130"/>
                                <path stroke="#8adcdc" d="M155 259V250M171 259V240M187 259V228M203 259V216M219 259V204M235 259V192M251 259V184M264 259V180"/>
                                <path stroke="#f4b25f" d="M155 259V254M171 259V250M187 259V248M203 259V246M219 259V245M235 259V244M251 259V243M264 259V242"/>
                            </g>
                            <path stroke="#3f7db5" stroke-width="14" d="M336 235V134M356 235V134M376 235V140M396 235V142M416 235V134M436 235V120M456 235V106M476 235V105"/>
                            <path d="M325 132H485" stroke="#bbb" stroke-dasharray="4 3"/>
                            <g fill="none" stroke-width="7">
                                <path stroke="#7cc48a" d="M573 259V241M591 259V232M609 259V222M627 259V205M645 259V175M663 259V170"/>
                                <path stroke="#3f7db5" d="M582 259V236M600 259V228M618 259V214M636 259V182M654 259V111M668 259V115"/>
                            </g>
                            <g fill="none" stroke-width="58" transform="rotate(-90 801 197)">
                                <circle cx="801" cy="197" r="49" stroke="#3f7db5" pathLength="100" stroke-dasharray="25 75"/>
                                <circle cx="801" cy="197" r="49" stroke="#7cc48a" pathLength="100" stroke-dasharray="41 59" stroke-dashoffset="-25"/>
                                <circle cx="801" cy="197" r="49" stroke="#e2694c" pathLength="100" stroke-dasharray="17 83" stroke-dashoffset="-66"/>
                                <circle cx="801" cy="197" r="49" stroke="#7f5fc0" pathLength="100" stroke-dasharray="17 83" stroke-dashoffset="-83"/>
                            </g>
                            <text x="801" y="200" font-size="7" fill="#444" text-anchor="middle">$M</text>
                            <use href="#fin-titles"/>
                            <path d="M130 430V590H262" fill="none" stroke="#ddd"/>
                            <path fill="#7cc48a" d="M151 523h5v5h-5zM184 532h5v5h-5zM222 524h5v5h-5zM167 551h5v5h-5zM204 555h5v5h-5zM240 546h5v5h-5zM262 569h5v5h-5z"/>
                            <path stroke="#3f7db5" stroke-width="27" d="M381 559V430M423 559V424M462 559V418"/>
                            <path d="M355 559H485M355 424 485 416" stroke="#ccc" fill="none"/>
                            <use href="#fin-lower"/>
                        </svg>
                    </div>
                    <div class="card-name">Financial_Services_Demo</div>
                </div>
                <div class="card wide">
                    <div class="thumb sheet"><svg class="sheet-icon" viewBox="0 0 89 80"><use href="#sheet"/></svg></div>
                    <div class="card-name">Inventory MS3</div>
                </div>
            </div>

            <div class="section-head">
                <h2>Workbooks</h2>
                <a class="view-all">View all</a>
            </div>
            <div class="grid workbooks">
                <div class="card">
                    <div class="thumb"><svg class="shot" viewBox="0 0 2040 1200" preserveAspectRatio="xMinYMin meet"><use href="#t-floor"/></svg></div>
                    <div class="card-name">OOW Demo Booth Floor...</div>
                </div>
                <div class="card">
                    <div class="thumb"><svg class="shot" viewBox="0 0 990 642" preserveAspectRatio="xMinYMin meet"><use href="#t-logistics"/></svg></div>
                    <div class="card-name">Logistics &amp; Supply Chain...</div>
                </div>
                <div class="card">
                    <div class="thumb"><svg class="shot" viewBox="0 0 990 642" preserveAspectRatio="xMinYMin meet"><use href="#t-ms3"/></svg></div>
                    <div class="card-name">MS3 Demo</div>
                </div>
                <div class="card">
                    <div class="thumb"><svg class="shot" viewBox="0 0 330 214" preserveAspectRatio="xMinYMin meet"><use href="#t-mfg"/></svg></div>
                    <div class="card-name">Manufacturing Perform...</div>
                </div>
                <div class="card">
                    <div class="thumb">
                        <svg class="shot" viewBox="0 0 990 642" preserveAspectRatio="xMinYMin meet">
                            <text x="75" y="20" font-size="8.500" fill="#555">Quality Score</text>
                            <text x="75" y="37" font-size="7.500" fill="#777">Full Range</text>
                            <path d="M70 43H915" stroke="#e6e6e6" stroke-width="1.500"/>
                            <g font-size="9.500" font-weight="700" fill="#333">
                                <text x="84" y="70">Cost of Care</text><text x="294" y="70">Total Patient Revenue</text><text x="504" y="70">Payroll Cost HC</text><text x="731" y="70">Quality</text>
                                <text x="84" y="339">Cost per Employee</text><text x="294" y="339">Length of Stay</text><text x="504" y="339">Recalls</text><text x="725" y="339">Backorder</text>
                            </g>
                            <g font-size="20" fill="#6ea8dc">
                                <text x="84" y="114">$871M</text><text x="294" y="114">$2.13B</text><text x="504" y="114">$286M</text><text x="731" y="114">65</text>
                                <text x="84" y="378">$64K</text><text x="294" y="378">3.1</text><text x="504" y="378">36</text><text x="725" y="378">213</text>
                            </g>
                            <g font-size="8.500" fill="#444">
                                <text x="84" y="138">Cost of Care by Quarter</text><text x="294" y="138">Revenue by Quarter</text><text x="504" y="138">Payroll by Quarter</text><text x="731" y="138">Quality Score by Provider</text>
                                <text x="84" y="399">Regular pay by Location</text><text x="294" y="399">LOS by Quarter</text><text x="504" y="399">Recalls by Month</text><text x="725" y="399">Backorder by Quarter</text>
                            </g>
                            <path d="M124 187H265M124 207H265M124 227H265M124 247H265M332 197H475M332 232H475M522 187H685M522 207H685M522 227H685M522 247H685M750 187H895M750 207H895M750 227H895M750 247H895M305 445H480M305 470H480M305 510H480M305 550H480M515 445H690M515 480H690M515 520H690M515 555H690M750 445H895M750 480H895M750 520H895M750 560H895" stroke="#f1f1f1"/>
                            <path d="M124 268H265M332 268H475M522 268H685M750 268H895M125 594H275M305 592H480M515 574H690M750 594H895" stroke="#ccc"/>
                            <g fill="none" stroke-width="13">
                                <path stroke="#7cc48a" d="M132 268V240M153 268V204M174 268V198M195 268V195M216 268V195M237 268V190M258 268V190"/>
                                <path stroke="#f5d269" d="M132 268V245M153 268V212M174 268V207M195 268V203M216 268V203M237 268V199M258 268V199"/>
                                <path stroke="#e2694c" d="M132 268V252M153 268V243M174 268V240M195 268V240M216 268V238M237 268V237M258 268V237"/>
                                <path stroke="#7f5fc0" d="M132 268V258M153 268V253M174 268V251M195 268V250M216 268V250M237 268V250M258 268V250"/>
                                <path stroke="#3f7db5" d="M557 268V221M578 268V219M597 268V221M617 268V216M637 268V210M657 268V204M677 268V202"/>
                                <path stroke="#d672b0" stroke-width="14" d="M342 268V215M364 268V205M385 268V201M406 268V198M426 268V195M447 268V189M468 268V192"/>
                            </g>
                            <path d="M550 222 578 218 597 220 617 208 637 208 657 202 682 202" fill="none" stroke="#7cc48a" stroke-width="2.500"/>
                            <path stroke="#a6bc4c" stroke-width="22" d="M763 268V201M803 268V196M842 268V197M881 268V198"/>
                            <path stroke="#f5d269" stroke-width="26" d="M132 472H167M132 520H167M132 569H167"/>
                            <path stroke="#7cc48a" stroke-width="26" d="M167 472H198M167 520H200M167 569H198"/>
                            <path stroke="#3f7db5" stroke-width="26" d="M198 472H245M200 520H248M198 569H241"/>
                            <path stroke="#f7f28a" stroke-width="22" d="M345 592V468M385 592V461M424 592V464M463 592V459"/>
                            <path stroke="#a860c0" stroke-width="8" d="M543 574V520M556 574V520M569 574V538M581 574V465M594 574V502M606 574V556M619 574V538M632 574V520M645 574V483M659 574V556M672 574V502M685 574V538"/>
                            <path stroke="#f4b25f" stroke-width="22" d="M772 594V518M810 594V461M847 594V491M884 594V513"/>
                            <g font-size="7" fill="#777" text-anchor="middle">
                                <text x="197" y="304">Fiscal Quarter</text><text x="405" y="304">Fiscal Quarter</text><text x="617" y="304">Fiscal Quarter</text><text x="822" y="304">Provider</text>
                                <text x="198" y="621">Regular Pay</text><text x="405" y="621">Fiscal Quarter</text><text x="615" y="621">Month</text><text x="825" y="621">Fiscal Quarter</text>
                                <text x="763" y="280">Lori</text><text x="803" y="280">Daniel</text><text x="842" y="280">James</text><text x="881" y="280">Tom</text>
                                <text x="108" y="475">Austin</text><text x="108" y="523">Dallas</text><text x="106" y="572">Houston</text>
                                <text x="133" y="607">0</text><text x="175" y="607">$1K</text><text x="222" y="607">$2K</text><text x="265" y="607">$3K</text>
                                <text x="345" y="606">2021Q4</text><text x="385" y="606">2021Q1</text><text x="424" y="606">2021Q2</text><text x="463" y="606">2021Q3</text>
                                <text x="772" y="608">2020Q4</text><text x="810" y="608">2021Q1</text><text x="847" y="608">2021Q2</text><text x="884" y="608">2021Q3</text>
                            </g>
                            <path d="M132 278v12M153 278v12M174 278v12M195 278v12M216 278v12M237 278v12M258 278v12M342 278v12M364 278v12M385 278v12M406 278v12M426 278v12M447 278v12M468 278v12M557 278v12M578 278v12M597 278v12M617 278v12M637 278v12M657 278v12M677 278v12M543 580v26M556 580v26M569 580v26M581 580v26M594 580v26M606 580v26M619 580v26M632 580v26M645 580v26M659 580v26M672 580v26M685 580v26" stroke="#aaa" stroke-width="3"/>
                        </svg>
                    </div>
                    <div class="card-name">Cost of Care Analysis</div>
                </div>
                <div class="card">
                    <div class="thumb">
                        <svg class="shot" viewBox="0 0 990 642" preserveAspectRatio="xMinYMin meet">
                            <g font-size="10.500" font-weight="700" fill="#444">
                                <text x="85" y="28">Turnover by Department</text><text x="98" y="343">Leavers Distribution</text><text x="466" y="343">Reasons of Leaving</text>
                            </g>
                            <path d="M115 47H790M115 85H790M115 124H790M115 163H790M115 202H790M115 241H790M135 360V595M175 360V595M220 360V595M265 360V595M305 360V595M118 400H330M118 440H330M118 478H330M118 517H330M118 555H330" stroke="#f0f0f0"/>
                            <path d="M115 280H790M118 360V595H330" fill="none" stroke="#ccc"/>
                            <path fill="#c9d9e8" d="M138 207C300 203 450 185 530 152 620 122 700 95 762 72V230C650 238 500 250 400 268 300 280 200 282 138 282Z"/>
                            <path fill="#b5dcc0" d="M138 268 290 262 450 268 600 250 762 252V265L600 262 450 272 290 274 138 280Z"/>
                            <path d="M138 283 290 255 450 218 600 183 762 150" fill="none" stroke="#4a86ba" stroke-width="2" stroke-dasharray="8 4"/>
                            <path d="M138 241H762" stroke="#e2694c" stroke-width="2" stroke-dasharray="6 3"/>
                            <path d="M138 262H762" stroke="#9a9aa8" stroke-width="2" stroke-dasharray="6 3"/>
                            <path d="M138 272 215 252 290 270 370 263 450 270 525 195 602 67 680 163 762 203" fill="none" stroke="#4a86ba" stroke-width="3"/>
                            <g fill="#e2694c"><circle cx="290" cy="241" r="3.500"/><circle cx="762" cy="241" r="3.500"/></g>
                            <circle cx="525" cy="241" r="3.500" fill="#f5d269"/>
                            <g fill="#7f5fc0"><circle cx="290" cy="262" r="3.500"/><circle cx="762" cy="262" r="3.500"/></g>
                            <g font-size="5.500" fill="#888" text-anchor="middle">
                                <text x="138" y="292">January 2019</text><text x="215" y="292">February 2019</text><text x="290" y="292">March 2019</text><text x="370" y="292">April 2019</text><text x="445" y="292">May 2019</text>
                                <text x="525" y="292">June 2019</text><text x="602" y="292">July 2019</text><text x="680" y="292">August 2019</text><text x="762" y="292">September 2019</text>
                                <text x="443" y="306">Fiscal Period (Month)</text><text x="224" y="622">Age</text>
                                <text x="103" y="50">24</text><text x="103" y="89">20</text><text x="103" y="128">16</text><text x="103" y="167">12</text><text x="103" y="206">8</text><text x="103" y="245">4</text><text x="103" y="283">0</text>
                                <text x="106" y="364">600</text><text x="106" y="404">500</text><text x="106" y="443">400</text><text x="106" y="482">300</text><text x="106" y="520">200</text><text x="106" y="559">100</text><text x="106" y="598">0</text>
                            </g>
                            <g font-size="6.500" fill="#666">
                                <text x="808" y="133">Department</text>
                                <text x="820" y="149">College of Busine...</text><text x="820" y="162">College of Educ &amp;...</text><text x="820" y="175">College of Liberal...</text><text x="820" y="188">College of the Arts</text><text x="820" y="201">University College</text><text x="820" y="221">Trend (95% Conf...)</text>
                                <text x="352" y="457">Department</text>
                                <text x="364" y="474">College of Busine...</text><text x="364" y="487">College of Educ &amp;...</text><text x="364" y="500">College of Liberal...</text><text x="364" y="513">College of the Arts</text><text x="364" y="526">University College</text>
                            </g>
                            <path d="M808 144h6v6h-6zM352 469h6v6h-6z" fill="#3f7db5"/><path d="M808 157h6v6h-6zM352 482h6v6h-6z" fill="#7cc48a"/><path d="M808 170h6v6h-6zM352 495h6v6h-6z" fill="#f5d269"/><path d="M808 183h6v6h-6zM352 508h6v6h-6z" fill="#e2694c"/><path d="M808 196h6v6h-6zM352 521h6v6h-6z" fill="#7f5fc0"/>
                            <g fill="#7cc48a" fill-opacity=".6">
                                <circle cx="308" cy="385" r="6"/><circle cx="283" cy="398" r="6"/><circle cx="275" cy="415" r="6"/><circle cx="255" cy="425" r="6"/><circle cx="245" cy="455" r="6"/><circle cx="270" cy="448" r="6"/>
                            </g>
                            <g fill="#e2694c" fill-opacity=".6">
                                <circle cx="292" cy="403" r="6"/><circle cx="308" cy="415" r="6"/><circle cx="285" cy="430" r="6"/><circle cx="295" cy="437" r="6"/><circle cx="280" cy="435" r="6"/>
                            </g>
                            <g fill="#7f5fc0" fill-opacity=".55"><circle cx="265" cy="453" r="6"/><circle cx="285" cy="452" r="6"/><circle cx="275" cy="450" r="6"/></g>
                            <g fill="#f5d269" fill-opacity=".7"><circle cx="275" cy="480" r="6"/><circle cx="295" cy="483" r="6"/><circle cx="285" cy="478" r="6"/></g>
                            <g fill="#3f7db5" fill-opacity=".6">
                                <circle cx="235" cy="490" r="7"/><circle cx="250" cy="485" r="7"/><circle cx="262" cy="480" r="7"/><circle cx="272" cy="490" r="7"/><circle cx="240" cy="500" r="7"/><circle cx="255" cy="497" r="7"/><circle cx="268" cy="502" r="7"/><circle cx="280" cy="500" r="7"/>
                                <circle cx="233" cy="508" r="7"/><circle cx="247" cy="510" r="7"/><circle cx="260" cy="512" r="7"/><circle cx="275" cy="513" r="7"/><circle cx="240" cy="516" r="6"/><circle cx="255" cy="518" r="6"/><circle cx="268" cy="515" r="6"/><circle cx="282" cy="510" r="6"/>
                            </g>
                            <g text-anchor="middle">
                                <text x="692" y="404" font-size="33" fill="#e2694c">Worklife Balance</text>
                                <text x="635" y="446" font-size="31" fill="#ea8a70">Lack Of Flexibility</text>
                                <text x="610" y="481" font-size="24" fill="#f5c4b5">Career Plan</text>
                                <text x="529" y="503" font-size="13" fill="#f8dcd3">Stress</text>
                                <text x="719" y="527" font-size="37" fill="#a84a32">Better Opportunity</text>
                                <text x="500" y="537" font-size="27" fill="#eea893">Others</text>
                                <text x="621" y="553" font-size="12" fill="#f8cfc3">Family Reasons</text>
                                <text x="526" y="582" font-size="23" fill="#f5c4b5">Relocation</text>
                                <text x="742" y="600" font-size="39" fill="#7a3020">Higher Pay Rate</text>
                            </g>
                        </svg>
                    </div>
                    <div class="card-name">Higher Education Demo</div>
                </div>
            </div>

            <div class="section-head">
                <h2>Dashboards and Reports</h2>
                <a class="view-all">View all</a>
            </div>
            <div class="grid tiles">
                <div class="tile"><svg class="tile-icon"><use href="#i-grid"/></svg>Sample Maps, Reg...</div>
                <div class="tile"><svg class="tile-icon"><use href="#i-grid"/></svg>Sample Features - ...</div>
                <div class="tile"><svg class="tile-icon"><use href="#i-grid"/></svg>Sample Dashboar...</div>
                <div class="tile"><svg class="tile-icon"><use href="#i-gauge"/></svg>Student Diversity ...</div>
                <div class="tile"><svg class="tile-icon"><use href="#i-gauge"/></svg>Degree Completio...</div>
                <div class="tile"><svg class="tile-icon"><use href="#i-gauge"/></svg>Degree Completio...</div>
                <div class="tile"><svg class="tile-icon"><use href="#i-gauge"/></svg>Faculty Detail</div>
                <div class="tile"><svg class="tile-icon"><use href="#i-gauge"/></svg>Degree Completio...</div>
                <div class="tile"><svg class="tile-icon"><use href="#i-gauge"/></svg>1 Year Retention R...</div>
                <div class="tile"><svg class="tile-icon"><use href="#i-gauge"/></svg>Term GPA Year Ag...</div>
                <div class="tile"><svg class="tile-icon"><use href="#i-gauge"/></svg>Term GPA Year Ag...</div>
                <div class="tile"><svg class="tile-icon"><use href="#i-gauge"/></svg>Student Academic...</div>
                <div class="tile"><svg class="tile-icon"><use href="#i-gauge"/></svg></div>
                <div class="tile"><svg class="tile-icon"><use href="#i-gauge"/></svg></div>
                <div class="tile"><svg class="tile-icon"><use href="#i-gauge"/></svg></div>
                <div class="tile"><svg class="tile-icon"><use href="#i-gauge"/></svg></div>
                <div class="tile"><svg class="tile-icon"><use href="#i-gauge"/></svg></div>
                <div class="tile"><svg class="tile-icon"><use href="#i-gauge"/></svg></div>
            </div>
        </div>
        <div class="scrollbar"></div>
    </main>

    <!-- Рамки-пометки поверх снимка -->
    <div class="mark mark-menu"><span>1</span></div>
    <div class="mark mark-console"><span>2</span></div>
</div>

</body>
</html>
```

FILE: styles.css
```css
html, body {
    margin: 0;
    height: 100%;
    overflow: hidden;
}
body {
    font-family: "Noto Sans", sans-serif;
    background: #f5f4f2;
    color: #1f1d1b;
}
svg text {
    font-family: "Noto Sans", sans-serif;
}
.sprite {
    position: absolute;
    width: 0;
    height: 0;
}
.app {
    position: relative;
    display: flex;
    height: 1800px;
}

/* sidebar */
.sidebar {
    width: 600px;
    flex: none;
    background: #312d2a;
    box-shadow: inset -5px 0 4px -3px #1c1a18;
}
.side-title {
    height: 115px;
    padding: 38px 0 0 48px;
    box-sizing: border-box;
    color: #fff;
    font-size: 33px;
    line-height: 48px;
}
.nav-item {
    position: relative;
    display: flex;
    align-items: center;
    gap: 44px;
    height: 100px;
    padding-left: 60px;
    color: #b6b3af;
    font-size: 32px;
    letter-spacing: -.3px;
}
.nav-item.active {
    height: 105px;
    padding-top: 5px;
    box-sizing: border-box;
    background: #1f1e1c;
    color: #fff;
    font-weight: 700;
    letter-spacing: -.5px;
}
.nav-item.active::before {
    content: "";
    position: absolute;
    left: 20px;
    top: 5px;
    bottom: 0;
    width: 6px;
    background: #6f8f5f;
}
.nav-icon {
    width: 40px;
    height: 40px;
    flex: none;
    fill: none;
    stroke: #8b8885;
    stroke-width: 3;
}
.active .nav-icon {
    stroke: #fff;
}

/* top bar */
.main {
    position: relative;
    flex: 1;
    min-width: 0;
}
.topbar {
    display: flex;
    align-items: center;
    height: 80px;
    padding: 0 40px 0 35px;
    background: #312d2a;
}
.burger {
    width: 34px;
    height: 24px;
    flex: none;
    fill: none;
    stroke: #fff;
    stroke-width: 3;
}
.logo {
    width: 190px;
    height: 44px;
    margin: 0 15px 0 27px;
    flex: none;
}
.logo-word {
    font-family: "DejaVu Sans", sans-serif;
    font-size: 34px;
    fill: #fff;
    stroke: #fff;
    stroke-width: .5;
}
.logo-reg {
    font-family: "Liberation Sans", sans-serif;
    font-size: 9px;
    fill: #fff;
}
.brand {
    color: #fff;
    font-size: 32px;
    flex: 1;
}
.create {
    width: 105px;
    height: 48px;
    border: 0;
    border-radius: 4px;
    background: #fff;
    color: #1f1d1b;
    font-family: inherit;
    font-size: 24px;
    padding: 0;
}
.kebab {
    width: 6px;
    height: 28px;
    margin: 0 61px 0 53px;
    fill: #fff;
}
.avatar {
    width: 48px;
    height: 48px;
    border-radius: 50%;
    background: #fff;
    color: #1f1d1b;
    font-size: 23px;
    line-height: 48px;
    text-align: center;
}

/* page content */
.content {
    padding: 40px 115px 0 84px;
}
.search {
    display: block;
    box-sizing: border-box;
    width: calc(100% - 2px);
    height: 73px;
    margin-left: 16px;
    padding: 10px 26px 0;
    border: 2px solid #8b8a87;
    border-radius: 3px;
    background: #fff;
    font-family: inherit;
    font-size: 32px;
    letter-spacing: .1px;
}
.search::placeholder {
    color: #8b8a87;
}
.chips {
    display: flex;
    gap: 20px;
    margin: 51px 0 73px 16px;
}
.chip {
    height: 61px;
    padding: 0 20px;
    box-sizing: border-box;
    border: 2px solid #8b8a87;
    border-radius: 31px;
    color: #4a4845;
    font-size: 28px;
    letter-spacing: -.1px;
    line-height: 58px;
}
.grid {
    display: grid;
    grid-template-columns: repeat(6, 1fr);
    gap: 20px;
}
.recent {
    grid-auto-rows: 300px;
}
.workbooks {
    grid-auto-rows: 300px;
}
.tiles {
    grid-auto-rows: 90px;
}
.card, .tile {
    min-width: 0;
    border-radius: 12px;
    background: #fff;
    box-shadow: 0 2px 5px rgba(0, 0, 0, .25);
    overflow: hidden;
}
.card {
    display: flex;
    flex-direction: column;
}
.card.wide {
    grid-column: span 2;
}
.card.tall {
    grid-row: span 2;
}
.thumb {
    flex: 1;
    min-height: 0;
}
.shot {
    display: block;
    width: 100%;
    height: 100%;
    filter: blur(.5px);
}
.sheet {
    display: flex;
    justify-content: center;
    padding-top: 66px;
}
.sheet-icon {
    width: 89px;
    height: 80px;
}
.sheet-line {
    fill: none;
    stroke: #84a98a;
    stroke-width: 7;
}
.sheet-box {
    fill: #84a98a;
}
.sheet-x {
    fill: #fff;
    font-size: 28px;
    font-weight: 700;
    text-anchor: middle;
}
.card-name {
    height: 86px;
    padding: 0 16px;
    flex: none;
    font-size: 25px;
    letter-spacing: -.5px;
    line-height: 84px;
    white-space: nowrap;
}
.section-head {
    display: flex;
    justify-content: space-between;
    align-items: center;
    height: 50px;
    margin: 51px 0 24px;
}
.section-head h2 {
    margin: -2px 0 0;
    font-size: 35.5px;
    font-weight: 800;
    letter-spacing: -.3px;
}
.view-all {
    color: #1f5d7f;
    font-size: 28px;
}
.tile {
    display: flex;
    align-items: center;
    gap: 20px;
    padding: 0 20px;
    font-size: 25px;
    letter-spacing: -.5px;
    white-space: nowrap;
}
.tile-icon {
    width: 40px;
    height: 40px;
    flex: none;
}
.grid-frame {
    fill: #fff;
    stroke: #1f5a7c;
    stroke-width: 4;
}
.grid-cells {
    fill: #1f5a7c;
}
.gauge-ring {
    fill: none;
    stroke: #7faabf;
    stroke-width: 4;
}
.gauge-hub {
    fill: none;
    stroke: #5f8ea8;
    stroke-width: 3.5;
}
.scrollbar {
    position: absolute;
    top: 356px;
    right: 12px;
    width: 8px;
    height: 947px;
    border-radius: 4px;
    background: #b9b6ae;
}

/* annotation boxes */
.mark {
    position: absolute;
    box-sizing: border-box;
    border: 6px solid #a5481c;
    color: #a5481c;
    font-family: "Liberation Sans", sans-serif;
    font-size: 36px;
    font-weight: 700;
    line-height: 36px;
}
.mark-menu {
    left: 594px;
    top: 5px;
    width: 109px;
    height: 75px;
    padding: 14px 0 0 8px;
}
.mark-console {
    left: 7px;
    top: 622px;
    width: 594px;
    height: 105px;
    padding: 29px 0 0 8px;
}
```
